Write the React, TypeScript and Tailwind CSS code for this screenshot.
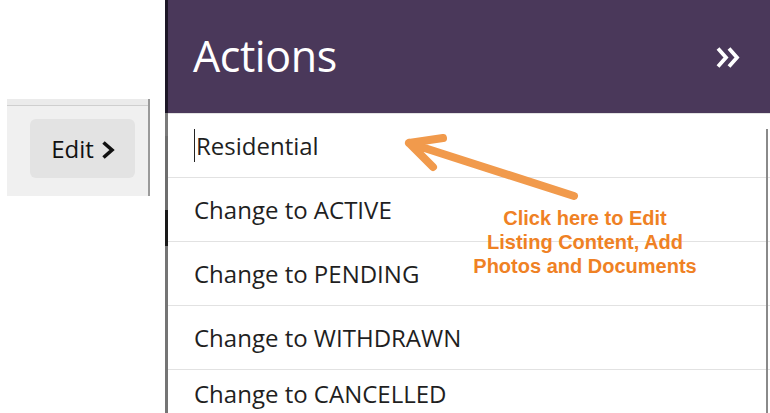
const rows = [
  "Change to ACTIVE",
  "Change to PENDING",
  "Change to WITHDRAWN",
];

const App = () => {
  return (
    <div
      className="relative flex h-[413px] w-[770px] overflow-hidden bg-white"
      style={{ fontFamily: '"Open Sans", "Noto Sans", sans-serif' }}
    >
      {/* left page behind the drawer */}
      <div className="w-[165px] shrink-0 pl-[7px] pt-[99px]">
        <div className="h-[97px] w-[143px] border-r-2 border-[#9a9a9a] bg-[#f0f0f0]">
          <div className="h-[7px] border-b border-[#cfcfcf] bg-[#ebebeb]" />
          <button className="ml-[23px] mt-[13px] flex h-[59px] w-[105px] items-center justify-center gap-[6px] rounded-md bg-[#e3e3e3] pl-[2px] text-[24px] text-[#111]">
            Edit
            <svg width="16" height="20" viewBox="0 0 16 20" fill="none" className="mt-[2px]">
              <path d="M3.5 2.5 L12 10 L3.5 17.5" stroke="#111" strokeWidth="3.6" />
            </svg>
          </button>
        </div>
      </div>

      {/* drawer edge */}
      <div className="flex w-[3px] shrink-0 flex-col">
        <div className="h-[113px] shrink-0 bg-[#1d1727]" />
        <div className="h-[23px] shrink-0 bg-[#7a7a7a]" />
        <div className="h-[74px] shrink-0 bg-[#6e6e6e]" />
        <div className="h-[36px] shrink-0 bg-[#1a1a1a]" />
        <div className="flex-1 bg-[#757575]" />
      </div>

      {/* actions drawer */}
      <div className="relative flex flex-1 flex-col">
        <div className="flex h-[113px] shrink-0 items-center justify-between bg-[#4a385a] pl-[25px] pr-[30px]">
          <h1 className="text-[43px] font-normal tracking-[-0.01em] text-white">
            Actions
          </h1>
          <svg width="25" height="23" viewBox="0 0 25 23" fill="none" className="mt-[1px]">
            <path
              d="M3 2.5 L11 11.5 L3 20.5 M14 2.5 L22 11.5 L14 20.5"
              stroke="white"
              strokeWidth="3.8"
            />
          </svg>
        </div>

        <div className="flex h-[65px] shrink-0 items-center border-y border-[#e2e2e2] pl-[26px] text-[24px] text-[#1f1f1f]">
          <span className="mr-[1px] inline-block h-[33px] w-px bg-[#222]" />
          Residential
        </div>
        {rows.map((r) => (
          <div
            key={r}
            className="flex h-[64px] shrink-0 items-center border-b border-[#e2e2e2] pl-[26px] text-[24px] text-[#1f1f1f]"
          >
            {r}
          </div>
        ))}
        <div className="flex h-[48px] shrink-0 items-center pl-[26px] text-[24px] text-[#1f1f1f]">
          Change to CANCELLED
        </div>

        {/* scrollbar */}
        <div className="absolute bottom-0 right-[2px] top-[129px] w-[2px] bg-[#8a8a8a]" />
      </div>

      {/* annotation arrow */}
      <svg
        className="pointer-events-none absolute left-0 top-0"
        width="770"
        height="413"
        viewBox="0 0 770 413"
        fill="none"
      >
        <path
          d="M574 196 L412 144 M409 143 L443 138 M409 143 L433 167"
          stroke="#f19a4c"
          strokeWidth="8"
          strokeLinecap="round"
          strokeLinejoin="round"
        />
      </svg>

      <div
        className="absolute left-[460px] top-[206px] w-[250px] text-center text-[20px] font-bold leading-[24px] text-[#ef8124]"
        style={{ fontFamily: '"Liberation Sans", Arial, sans-serif' }}
      >
        Click here to Edit
        <br />
        Listing Content, Add
        <br />
        Photos and Documents
      </div>
    </div>
  );
};

export default App;
